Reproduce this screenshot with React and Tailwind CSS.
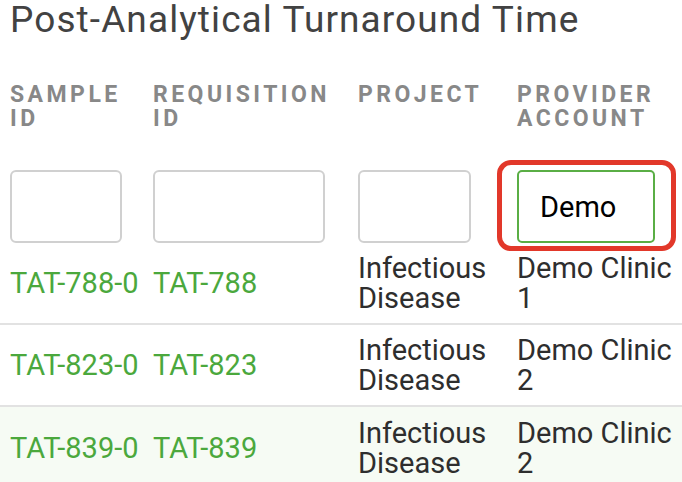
const rows = [
  { sample: "TAT-788-0", req: "TAT-788", project: ["Infectious", "Disease"], account: ["Demo Clinic", "1"] },
  { sample: "TAT-823-0", req: "TAT-823", project: ["Infectious", "Disease"], account: ["Demo Clinic", "2"] },
  { sample: "TAT-839-0", req: "TAT-839", project: ["Infectious", "Disease"], account: ["Demo Clinic", "2"] },
];

const cols = ["w-[143px]", "w-[205px]", "w-[159px]", "flex-1"];

const Cell = ({ i, children, className = "" }) => (
  <div className={`${cols[i]} pl-[10px] shrink-0 ${className}`}>{children}</div>
);

export default function App() {
  return (
    <div className="w-[682px] h-[482px] overflow-hidden bg-white font-['Roboto',sans-serif]">
      <h1 className="pl-[10px] text-[37px] leading-[40px] tracking-[1.1px] text-[#424242] whitespace-nowrap">
        Post-Analytical Turnaround Time
      </h1>

      {/* column headers */}
      <div className="flex mt-[43px] text-[23px] leading-[24px] font-bold tracking-[0.15em] text-[#888]">
        <Cell i={0}>SAMPLE<br />ID</Cell>
        <Cell i={1}>REQUISITION<br />ID</Cell>
        <Cell i={2}>PROJECT</Cell>
        <Cell i={3}>PROVIDER<br />ACCOUNT</Cell>
      </div>

      {/* filters */}
      <div className="flex pt-[39px]">
        <Cell i={0}>
          <input className="w-[112px] h-[73px] border-2 border-[#d0d0d0] rounded-[6px] outline-none" />
        </Cell>
        <Cell i={1}>
          <input className="w-[172px] h-[73px] border-2 border-[#d0d0d0] rounded-[6px] outline-none" />
        </Cell>
        <Cell i={2}>
          <input className="w-[113px] h-[73px] border-2 border-[#d0d0d0] rounded-[6px] outline-none" />
        </Cell>
        <Cell i={3}>
          <div className="relative w-[138px]">
            <input
              defaultValue="Demo"
              className="w-[138px] h-[73px] border-2 border-[#5aae45] rounded-[5px] pl-[21px] text-[29px] text-black outline-none"
            />
            <div className="absolute -left-[20px] -right-[21px] -top-[10px] -bottom-[8px] border-[5px] border-[#e2382a] rounded-[14px] pointer-events-none" />
          </div>
        </Cell>
      </div>

      {/* data rows */}
      {rows.map((r, idx) => (
        <div
          key={r.sample}
          className={`flex items-center h-[82px] text-[29px] leading-[30px] ${idx < 2 ? "border-b-2 border-[#e2e2e2]" : "bg-[#f6fbf4]"}`}
        >
          <Cell i={0} className="text-[#4ba83d]">{r.sample}</Cell>
          <Cell i={1} className="text-[#4ba83d]">{r.req}</Cell>
          <Cell i={2} className="text-[#2e2e2e]">{r.project[0]}<br />{r.project[1]}</Cell>
          <Cell i={3} className="text-[#2e2e2e] whitespace-nowrap">{r.account[0]}<br />{r.account[1]}</Cell>
        </div>
      ))}
    </div>
  );
}
